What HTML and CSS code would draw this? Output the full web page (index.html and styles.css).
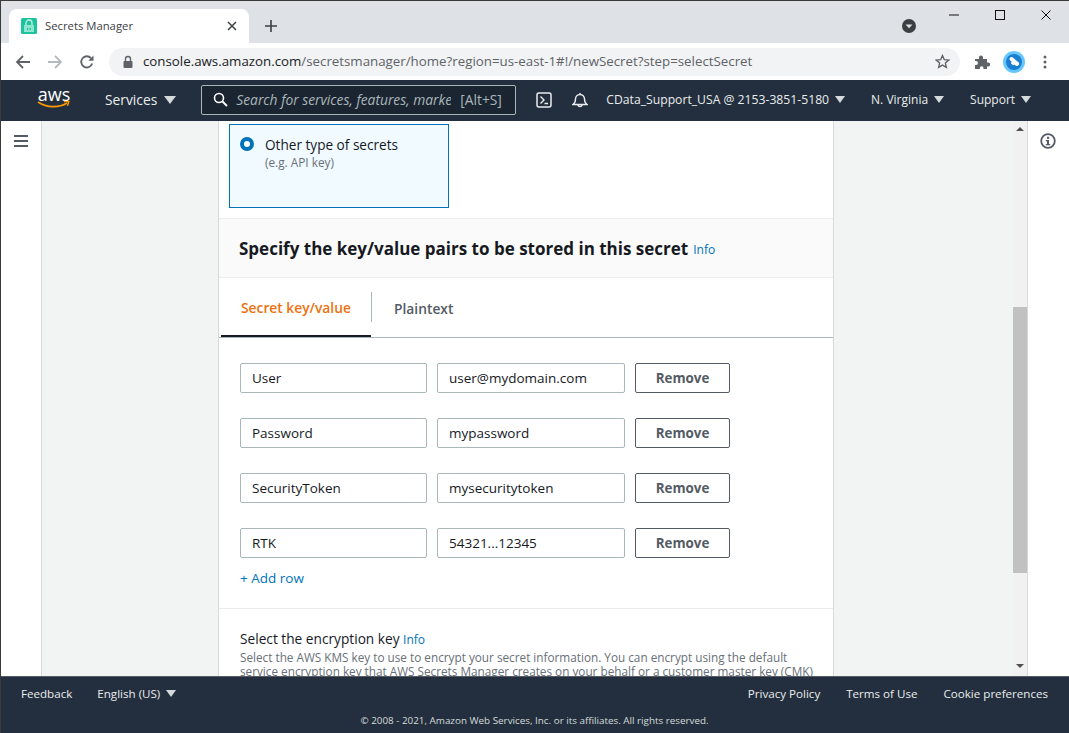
FILE: index.html
```html
<!DOCTYPE html>
<html lang="en">
<head>
    <meta charset="UTF-8">
    <title>Secrets Manager</title>
    <link rel="stylesheet" href="styles.css">
</head>
<body>
    <div class="window">
        <div class="tabstrip">
            <div class="tab">
                <svg class="favicon" width="16" height="16" viewBox="0 0 16 16">
                    <rect width="16" height="16" rx="1.500" fill="#1cc39c"/>
                    <path d="M5 7V5a3 3 0 0 1 6 0v2" fill="none" stroke="#c9f3e8" stroke-width="1.3"/>
                    <rect x="3" y="7" width="10" height="7" fill="#8fe6d0"/>
                    <rect x="6" y="10" width="1.2" height="2" fill="#1cc39c"/>
                    <rect x="8.6" y="10" width="1.2" height="2" fill="#1cc39c"/>
                </svg>
                <span class="tab-title">Secrets Manager</span>
                <svg width="10" height="10" viewBox="0 0 10 10"><path d="M1 1l8 8M9 1l-8 8" stroke="#3c4043" stroke-width="1.5"/></svg>
            </div>
            <svg class="new-tab" width="12" height="12" viewBox="0 0 12 12"><path d="M6 0v12M0 6h12" stroke="#3c4043" stroke-width="1.6"/></svg>
            <div class="tabstrip-right">
                <svg class="tab-search" width="14" height="14" viewBox="0 0 14 14"><circle cx="7" cy="7" r="7" fill="#3c4043"/><path d="M3.6 5.6h6.8L7 9.2z" fill="#dee1e6"/></svg>
                <div class="win-controls">
                    <svg width="10" height="10" viewBox="0 0 10 10"><path d="M0 5h10" stroke="#111" stroke-width="1"/></svg>
                    <svg width="10" height="10" viewBox="0 0 10 10"><rect x=".5" y=".5" width="9" height="9" fill="none" stroke="#111"/></svg>
                    <svg width="10" height="10" viewBox="0 0 10 10"><path d="M.5.5l9 9M9.5.5l-9 9" stroke="#111"/></svg>
                </div>
            </div>
        </div>

        <div class="toolbar">
            <svg width="16" height="16" viewBox="0 0 16 16"><path d="M15 8H2M8 2L2 8l6 6" fill="none" stroke="#5f6368" stroke-width="1.8"/></svg>
            <svg class="nav-forward" width="16" height="16" viewBox="0 0 16 16"><path d="M1 8h13M8 2l6 6-6 6" fill="none" stroke="#b6babf" stroke-width="1.8"/></svg>
            <svg class="nav-reload" width="16" height="16" viewBox="0 0 16 16"><path d="M13.2 9.500A5.600 5.600 0 1 1 12 4.100" fill="none" stroke="#5f6368" stroke-width="1.8"/><path d="M14.500 1.500v5.200H9.300z" fill="#5f6368"/></svg>
            <div class="omnibox">
                <svg width="12" height="14" viewBox="0 0 12 14"><path d="M3.500 6V4a2.500 2.500 0 0 1 5 0v2" fill="none" stroke="#5f6368" stroke-width="1.4"/><rect x="1.500" y="6" width="9" height="7" rx="1" fill="#5f6368"/></svg>
                <span class="url"><span class="url-host">console.aws.amazon.com</span>/secretsmanager/home?region=us-east-1#!/newSecret?step=selectSecret</span>
                <svg class="star" width="15" height="15" viewBox="0 0 24 24"><path d="M12 2.500l2.900 6.600 7.100.7-5.400 4.700 1.600 7-6.200-3.700-6.200 3.700 1.600-7L2 9.800l7.100-.7z" fill="none" stroke="#5f6368" stroke-width="2.2"/></svg>
            </div>
            <svg class="ext" width="16" height="16" viewBox="0 0 16 16"><path d="M1 5h4V3.500a2 2 0 0 1 4 0V5h4v3.500h1.200a2 2 0 0 1 0 4H13V15H9.500v-1a1.800 1.800 0 0 0-3.600 0v1H1v-4h1a2 2 0 0 0 0-4H1z" fill="#5f6368"/></svg>
            <svg class="avatar" width="22" height="22" viewBox="0 0 22 22"><circle cx="11" cy="11" r="11" fill="#66c7ff"/><circle cx="11" cy="11" r="8" fill="#1a7fd0"/><path d="M6.500 8.500a2 2 0 0 1 3-2.200l6 5a2.200 2.200 0 0 1-2.500 3.500l-1.500-1-1.500.5-2-2 .5-1.500z" fill="#fff"/></svg>
            <svg class="kebab" width="4" height="14" viewBox="0 0 4 14"><circle cx="2" cy="2" r="1.500" fill="#5f6368"/><circle cx="2" cy="7" r="1.500" fill="#5f6368"/><circle cx="2" cy="12" r="1.500" fill="#5f6368"/></svg>
        </div>

        <div class="topnav">
            <div class="aws-logo">
                <span class="aws-word">aws</span>
                <svg width="34" height="8" viewBox="0 0 34 8"><path d="M1 1c9 6 21 6 29 1" fill="none" stroke="#f90" stroke-width="1.600"/><path d="M27 .5l5-.3-1.500 4.600" fill="none" stroke="#f90" stroke-width="1.400"/></svg>
            </div>
            <span class="nav-item services">Services <i class="caret caret-lg"></i></span>
            <div class="searchbox">
                <svg width="15" height="15" viewBox="0 0 15 15"><circle cx="6" cy="6" r="4.500" fill="none" stroke="#fff" stroke-width="1.600"/><path d="M9.500 9.500l4.500 4.500" stroke="#fff" stroke-width="1.800"/></svg>
                <span class="search-text">Search for services, features, marke</span>
                <span class="search-key">[Alt+S]</span>
            </div>
            <svg class="cloudshell" width="16" height="16" viewBox="0 0 16 16"><rect x="1" y="1" width="14" height="14" rx="2" fill="none" stroke="#eaeded" stroke-width="1.500"/><path d="M4.500 4.500L8 8l-3.500 3.500M8.500 11.500h3.500" fill="none" stroke="#eaeded" stroke-width="1.400"/></svg>
            <svg class="bell" width="16" height="16" viewBox="0 0 16 16"><path d="M1 12.500c2.200-1.500 2.500-3 2.500-5.500a4.500 4.500 0 0 1 9 0c0 2.500.3 4 2.500 5.500z" fill="none" stroke="#eaeded" stroke-width="1.400"/><path d="M6 12.500a2 2 0 0 0 4 0M8 1v1" fill="none" stroke="#eaeded" stroke-width="1.400"/></svg>
            <span class="nav-item account">CData_Support_USA @ 2153-3851-5180 <i class="caret"></i></span>
            <span class="nav-item region">N. Virginia <i class="caret"></i></span>
            <span class="nav-item support">Support <i class="caret"></i></span>
        </div>

        <div class="main">
            <div class="side-rail">
                <svg width="14" height="12" viewBox="0 0 14 12"><path d="M0 1h14M0 6h14M0 11h14" stroke="#545b64" stroke-width="2"/></svg>
            </div>
            <div class="content">
                <div class="panel">
                    <div class="secret-type">
                        <div class="type-card">
                            <span class="radio"></span>
                            <div>
                                <div class="type-name">Other type of secrets</div>
                                <div class="type-hint">(e.g. API key)</div>
                            </div>
                        </div>
                    </div>
                    <div class="panel-head">
                        <h2>Specify the key/value pairs to be stored in this secret</h2>
                        <a class="info">Info</a>
                    </div>
                    <div class="tabs">
                        <div class="tab-link active">Secret key/value</div>
                        <div class="tab-sep"></div>
                        <div class="tab-link">Plaintext</div>
                    </div>
                    <div class="kv-list">
                        <div class="kv-row">
                            <div class="field key">User</div>
                            <div class="field value">user@mydomain.com</div>
                            <button class="remove">Remove</button>
                        </div>
                        <div class="kv-row">
                            <div class="field key">Password</div>
                            <div class="field value">mypassword</div>
                            <button class="remove">Remove</button>
                        </div>
                        <div class="kv-row">
                            <div class="field key">SecurityToken</div>
                            <div class="field value">mysecuritytoken</div>
                            <button class="remove">Remove</button>
                        </div>
                        <div class="kv-row">
                            <div class="field key">RTK</div>
                            <div class="field value">54321...12345</div>
                            <button class="remove">Remove</button>
                        </div>
                        <a class="add-row">+ Add row</a>
                    </div>
                    <div class="encryption">
                        <div class="enc-title">Select the encryption key <a class="info-sm">Info</a></div>
                        <p class="enc-desc">Select the AWS KMS key to use to encrypt your secret information. You can encrypt using the default service encryption key that AWS Secrets Manager creates on your behalf or a customer master key (CMK)</p>
                    </div>
                </div>
            </div>
            <div class="scrollbar">
                <i class="arrow-up"></i>
                <div class="thumb"></div>
                <i class="arrow-down"></i>
            </div>
            <div class="info-rail">
                <svg width="16" height="16" viewBox="0 0 16 16"><circle cx="8" cy="8" r="6.800" fill="none" stroke="#545b64" stroke-width="1.800"/><rect x="7" y="3.800" width="2.200" height="2" fill="#545b64"/><path d="M5.800 7h3.200v4h1.200v1.200H5.800V11H7V8.200H5.800z" fill="#545b64"/></svg>
            </div>
        </div>

        <div class="footer">
            <div class="footer-top">
                <span class="foot-link feedback">Feedback</span>
                <span class="foot-link lang">English (US) <i class="caret"></i></span>
                <span class="foot-right">
                    <span class="foot-link">Privacy Policy</span>
                    <span class="foot-link">Terms of Use</span>
                    <span class="foot-link">Cookie preferences</span>
                </span>
            </div>
            <div class="copyright">© 2008 - 2021, Amazon Web Services, Inc. or its affiliates. All rights reserved.</div>
        </div>
    </div>
</body>
</html>
```

FILE: styles.css
```css
* {
    box-sizing: border-box;
}
html, body {
    margin: 0;
    padding: 0;
    height: 100%;
    overflow: hidden;
}
body {
    font-family: "Open Sans", "Noto Sans", sans-serif;
    background-color: #fff;
}
svg {
    display: block;
    flex: none;
}
.window {
    display: flex;
    flex-direction: column;
    height: 733px;
    border: 1px solid #3a3a3a;
    border-bottom: none;
    border-right: none;
}
.tabstrip {
    display: flex;
    align-items: flex-end;
    height: 42px;
    padding-left: 8px;
    background-color: #dee1e6;
}
.tab {
    display: flex;
    align-items: center;
    width: 240px;
    height: 34px;
    padding: 0 12px;
    background-color: #fff;
    border-radius: 8px 8px 0 0;
}
.favicon {
    margin-right: 8px;
}
.tab-title {
    flex: 1;
    margin-top: -2px;
    font-size: 11.300px;
    color: #3c4043;
}
.new-tab {
    margin: 0 0 11px 16px;
}
.tabstrip-right {
    display: flex;
    flex: 1;
    align-items: flex-start;
    justify-content: flex-end;
    align-self: stretch;
}
.tab-search {
    margin: 18px 33px 0 0;
}
.win-controls {
    display: flex;
    gap: 36px;
    padding: 9px 18px 0 0;
}
.toolbar {
    display: flex;
    align-items: center;
    height: 37px;
    padding-left: 14px;
    background-color: #fff;
}
.nav-forward {
    margin-left: 16px;
}
.nav-reload {
    margin-left: 16px;
}
.omnibox {
    display: flex;
    align-items: center;
    width: 851px;
    height: 28px;
    margin-left: 14px;
    padding: 0 10px 0 13px;
    background-color: #f1f3f4;
    border-radius: 14px;
}
.url {
    flex: 1;
    margin: -2px 0 0 9px;
    font-size: 13.300px;
    color: #5f6368;
    white-space: nowrap;
}
.url-host {
    color: #202124;
}
.ext {
    margin-left: 14px;
}
.avatar {
    margin-left: 13px;
}
.kebab {
    margin-left: 18px;
}
.topnav {
    display: flex;
    align-items: center;
    height: 41px;
    padding-bottom: 2px;
    background-color: #232f3e;
    color: #eaeded;
    font-size: 12px;
    white-space: nowrap;
}
.aws-logo {
    display: flex;
    flex-direction: column;
    align-items: center;
    width: 34px;
    margin: 0 0 2px 36px;
}
.aws-word {
    font-size: 18px;
    line-height: 13px;
    color: #fff;
}
.nav-item {
    display: flex;
    align-items: center;
    gap: 6px;
}
.services {
    margin-left: 34px;
    gap: 7px;
    font-size: 13.800px;
}
.caret {
    display: inline-block;
    width: 0;
    height: 0;
    border-left: 5px solid transparent;
    border-right: 5px solid transparent;
    border-top: 7px solid #d5dbdb;
}
.caret-lg {
    border-left-width: 6px;
    border-right-width: 6px;
    border-top-width: 8px;
}
.searchbox {
    display: flex;
    align-items: center;
    width: 315px;
    height: 30px;
    margin-left: 25px;
    padding: 0 9px 0 11px;
    background-color: #1b2532;
    border: 1px solid #aab7b8;
    border-radius: 2px;
}
.search-text {
    width: 215px;
    margin-left: 8px;
    overflow: hidden;
    font-size: 13.800px;
    font-style: italic;
    color: #aab7b8;
}
.search-key {
    margin-left: 9px;
    font-size: 13.800px;
    color: #aab7b8;
}
.cloudshell {
    margin-left: 20px;
}
.bell {
    margin-left: 20px;
}
.account {
    margin-left: 18px;
    font-size: 12.200px;
}
.region {
    margin-left: 26px;
}
.support {
    margin-left: 26px;
}
.main {
    display: flex;
    flex: 1;
    min-height: 0;
    overflow: hidden;
}
.side-rail {
    width: 41px;
    padding: 14px 0 0 13px;
    background-color: #fff;
    border-right: 1px solid #d5dbdb;
}
.content {
    width: 971px;
    padding-left: 176px;
    background-color: #f2f3f3;
    overflow: hidden;
}
.panel {
    width: 616px;
    background-color: #fff;
    border-left: 1px solid #d5dbdb;
    border-right: 1px solid #d5dbdb;
}
.secret-type {
    height: 98px;
    padding: 3px 10px 0;
    border-bottom: 1px solid #eaeded;
}
.type-card {
    display: flex;
    width: 220px;
    height: 84px;
    padding: 11px 10px;
    background-color: #f1faff;
    border: 1px solid #0073bb;
}
.radio {
    flex: none;
    width: 14px;
    height: 14px;
    margin: 1px 11px 0 0;
    background-color: #fff;
    border: 4px solid #0073bb;
    border-radius: 50%;
}
.type-name {
    font-size: 13.600px;
    line-height: 17px;
    color: #16191f;
}
.type-hint {
    margin-top: 2px;
    font-size: 11.800px;
    line-height: 14px;
    color: #687078;
}
.panel-head {
    display: flex;
    align-items: center;
    gap: 5px;
    height: 59px;
    padding-left: 20px;
    background-color: #fafafa;
    border-bottom: 1px solid #eaeded;
}
.panel-head h2 {
    margin: 0;
    font-size: 17px;
    font-weight: 700;
    color: #16191f;
}
.info {
    font-size: 12px;
    color: #0073bb;
    margin-top: 3px;
}
.tabs {
    display: flex;
    align-items: center;
    height: 60px;
    padding-left: 2px;
    border-bottom: 1px solid #aab7b8;
}
.tab-link {
    padding: 2px 22px 0;
    font-size: 13.800px;
    font-weight: 600;
    color: #545b64;
}
.tab-link.active {
    display: flex;
    align-items: center;
    width: 150px;
    height: 59px;
    padding: 2px 0 0 20px;
    color: #ec7211;
    white-space: nowrap;
    border-bottom: 2px solid #16191f;
}
.tab-sep {
    width: 1px;
    height: 30px;
    margin-bottom: 1px;
    background-color: #aab7b8;
}
.kv-list {
    display: flex;
    flex-direction: column;
    height: 271px;
    padding: 25px 20px 0 21px;
    border-bottom: 1px solid #eaeded;
}
.kv-row {
    display: flex;
    gap: 10px;
    margin-bottom: 25px;
}
.field {
    height: 30px;
    padding: 0 11px;
    font-size: 13.500px;
    line-height: 28px;
    color: #16191f;
    background-color: #fff;
    border: 1px solid #aab7b8;
    border-radius: 2px;
}
.key {
    width: 187px;
}
.value {
    width: 188px;
}
.remove {
    width: 95px;
    height: 30px;
    padding: 0;
    font-family: inherit;
    font-size: 13.400px;
    font-weight: 700;
    color: #545b64;
    background-color: #fff;
    border: 1px solid #545b64;
    border-radius: 2px;
}
.add-row {
    margin-top: -14px;
    font-size: 13.500px;
    color: #0073bb;
}
.encryption {
    padding: 20px 10px 0 21px;
}
.enc-title {
    font-size: 13.700px;
    line-height: 19px;
    color: #16191f;
}
.info-sm {
    font-size: 12px;
    color: #0073bb;
}
.enc-desc {
    margin: 1px 0 0;
    font-size: 11.750px;
    line-height: 14px;
    color: #687078;
}
.scrollbar {
    display: flex;
    flex-direction: column;
    align-items: center;
    width: 14px;
    padding-top: 6px;
    background-color: #f1f1f1;
}
.arrow-up, .arrow-down {
    width: 0;
    height: 0;
    border-left: 4px solid transparent;
    border-right: 4px solid transparent;
}
.arrow-up {
    border-bottom: 4px solid #505050;
}
.arrow-down {
    margin-top: 91px;
    border-top: 4px solid #505050;
}
.thumb {
    width: 100%;
    height: 266px;
    margin-top: 176px;
    background-color: #c1c1c1;
}
.info-rail {
    flex: 1;
    padding: 12px 0 0 12px;
    background-color: #fff;
    border-left: 1px solid #d5dbdb;
}
.footer {
    height: 57px;
    padding: 0 21px 0 20px;
    background-color: #232f3e;
    border-top: 1px solid #545b64;
    color: #eaeded;
}
.footer-top {
    display: flex;
    align-items: center;
    height: 33px;
    font-size: 11.600px;
}
.foot-link {
    display: flex;
    align-items: center;
    gap: 6px;
}
.lang {
    margin-left: 25px;
}
.foot-right {
    display: flex;
    gap: 26px;
    margin-left: auto;
}
.copyright {
    margin-top: 3px;
    font-size: 9.850px;
    line-height: 14px;
    text-align: center;
    color: #d5dbdb;
}
```
